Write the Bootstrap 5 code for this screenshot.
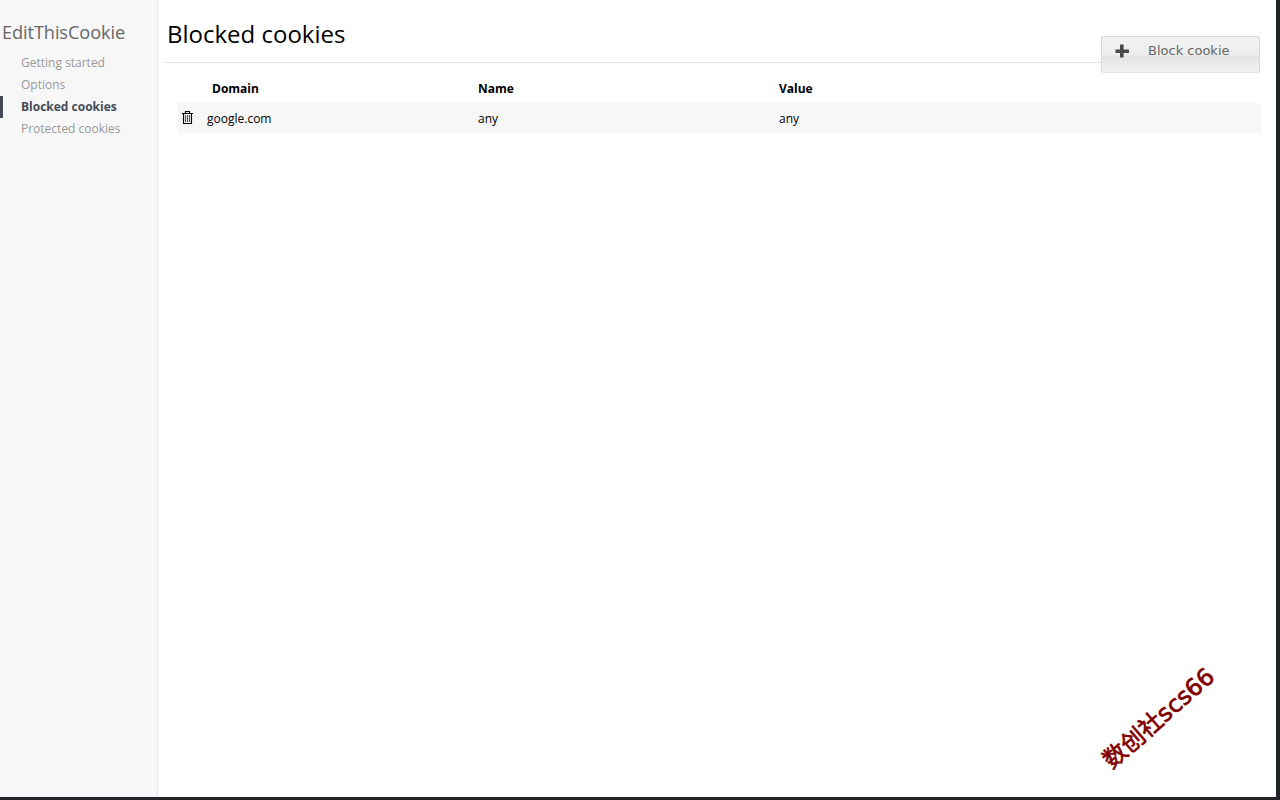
<!DOCTYPE html>
<html lang="en">
<head>
  <meta charset="UTF-8" />
  <meta name="viewport" content="width=device-width, initial-scale=1" />
  <title>Blocked cookies</title>
  <link href="https://cdn.jsdelivr.net/npm/bootstrap@5.3.3/dist/css/bootstrap.min.css" rel="stylesheet" />
  <style>
    html, body {
      height: 100%;
      overflow: hidden;
    }
    body {
      background-color: #202428;
      font-family: "Open Sans", "Noto Sans", sans-serif;
      color: #000;
    }
    .app-frame {
      width: 1276px;
      height: 797px;
      background-color: #fff;
    }
    .side-bar {
      width: 158px;
      flex: none;
      background-color: #f7f7f7;
      border-right: 1px solid #e6e6e6;
      padding-top: 20px;
    }
    .side-brand {
      font-size: 18.2px;
      line-height: 25px;
      color: #666;
      padding-left: 2px;
      margin: 0 0 7px;
      font-weight: 400;
      letter-spacing: -0.1px;
    }
    .side-link {
      display: block;
      height: 22px;
      line-height: 22px;
      padding-left: 21px;
      font-size: 12px;
      color: #999;
      text-decoration: none;
    }
    .side-link.is-active {
      font-weight: 700;
      color: #464a55;
      border-left: 3px solid #464a55;
      padding-left: 18px;
    }
    .main-pane {
      padding: 0 15px 0 5px;
    }
    .page-head {
      height: 63px;
      border-bottom: 1px solid #e3e3e3;
      padding: 17px 0 0 4px;
    }
    .page-title {
      font-size: 24px;
      line-height: 34px;
      font-weight: 400;
      margin: 0;
    }
    .block-btn {
      top: 36px;
      right: 16px;
      width: 159px;
      height: 37px;
      border: 1px solid #d8d8d8;
      border-bottom-color: #e4e4e4;
      border-radius: 3px;
      background: linear-gradient(#f3f3f3 0, #ededed 50%, #e4e4e4 55%, #f3f3f3 100%);
      color: #666;
      font-family: "DejaVu Sans", sans-serif;
      font-size: 13px;
      padding: 0 0 7px 13px;
      gap: 19px;
    }
    .cookie-table {
      margin-left: 14px;
      font-size: 12px;
    }
    .cookie-row {
      height: 30px;
      padding-top: 2px;
    }
    .cookie-head {
      height: 40px;
      padding-top: 17px;
      font-weight: 700;
    }
    .cookie-data {
      background-color: #f7f7f7;
    }
    .cell-icon { width: 30px; padding-left: 5px; margin-top: -4px; }
    .cell-domain { width: 271px; }
    .cell-name { width: 301px; }
    .head-domain { padding-left: 5px; }
    .head-icon { margin-top: 0; }
    .stamp {
      right: 48px;
      bottom: 66px;
      color: #800000;
      font-family: "DejaVu Sans", "Noto Sans CJK SC", sans-serif;
      font-size: 23.6px;
      line-height: 1;
      -webkit-text-stroke: 0.7px #800000;
      transform: rotate(-41deg);
      transform-origin: center;
    }
  </style>
</head>
<body>
  <div class="app-frame d-flex position-relative">
    <!-- Sidebar -->
    <nav class="side-bar">
      <h1 class="side-brand">EditThisCookie</h1>
      <a class="side-link" href="#">Getting started</a>
      <a class="side-link" href="#">Options</a>
      <a class="side-link is-active" href="#">Blocked cookies</a>
      <a class="side-link" href="#">Protected cookies</a>
    </nav>

    <!-- Main -->
    <main class="main-pane flex-grow-1">
      <div class="page-head">
        <h2 class="page-title">Blocked cookies</h2>
      </div>
      <div class="cookie-table">
        <div class="cookie-head d-flex">
          <div class="cell-icon head-icon"></div>
          <div class="cell-domain head-domain">Domain</div>
          <div class="cell-name">Name</div>
          <div>Value</div>
        </div>
        <div class="cookie-row cookie-data d-flex align-items-center">
          <div class="cell-icon d-flex">
            <svg width="11" height="13" viewBox="0 0 11 13" fill="none" stroke="#000" stroke-width="1.1">
              <path d="M0 2.5h11M3.5 2.5V0.5h4v2M1.5 2.5v10h8v-10"/>
              <path d="M3.5 4v7M5.5 4v7M7.5 4v7" stroke="#2f6b3a"/>
            </svg>
          </div>
          <div class="cell-domain">google.com</div>
          <div class="cell-name">any</div>
          <div>any</div>
        </div>
      </div>
    </main>

    <button type="button" class="block-btn position-absolute d-flex align-items-center">
      <svg width="14" height="14" viewBox="0 0 14 14"><path d="M5 0.5h3.6v5H14v3.4H8.6v4.6H5V8.9H0.5V5.5H5z" fill="#4a4a4a"/></svg>
      <span>Block cookie</span>
    </button>

    <div class="stamp position-absolute">数创社scs66</div>
  </div>

  <script src="https://cdn.jsdelivr.net/npm/bootstrap@5.3.3/dist/js/bootstrap.bundle.min.js"></script>
</body>
</html>
